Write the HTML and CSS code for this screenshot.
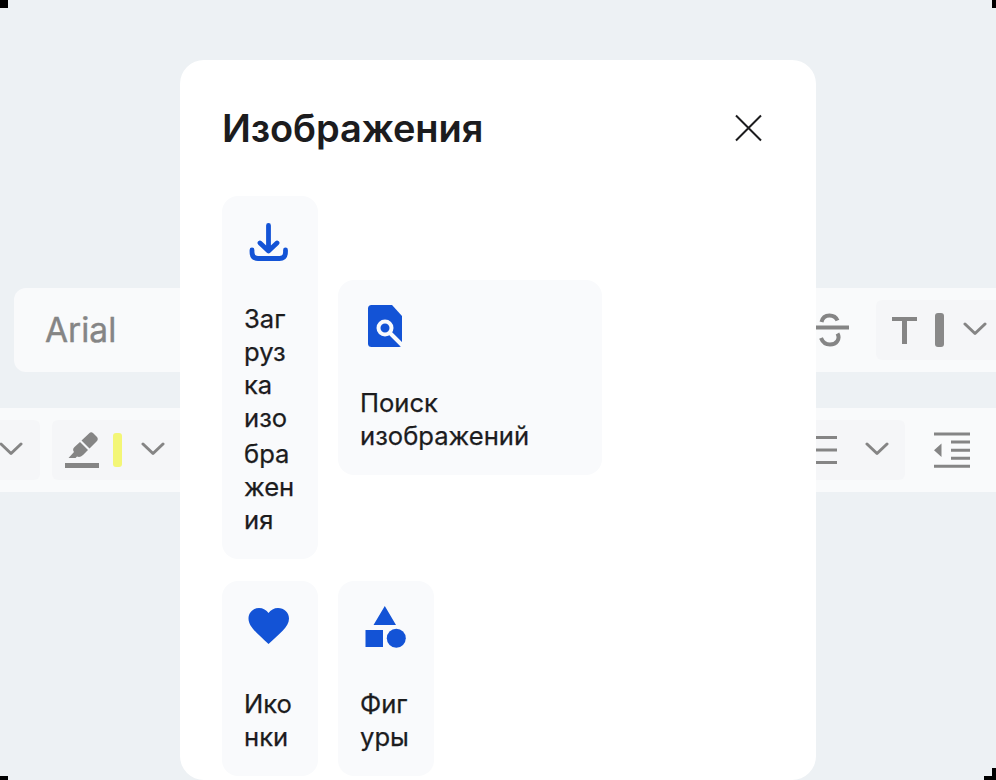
FILE: index.html
```html
<!DOCTYPE html>
<html lang="ru">
<head>
<meta charset="utf-8">
<title>Изображения</title>
<link rel="stylesheet" href="styles.css">
</head>
<body>
<main class="stage">
  <div class="toolbar toolbar-top">
    <span class="font-name">Arial</span>
    <div class="tools-right">
      <svg class="icon" width="40" height="40" viewBox="0 0 40 40" fill="none" stroke="#858585" stroke-width="4"><path d="M12.500 12C13.500 7.500 17 5.500 20.500 5.500C24.500 5.500 27 7 28.500 10.500M3 17.500H41M12 28C14 33 18 34.500 21 34.500C27.500 34.500 31.500 29 28.500 23.500"/></svg>
      <div class="tool-group group-color">
        <svg width="25" height="27" viewBox="0 0 25 27" fill="#858585"><path d="M0 0H25V4H15V27H10V4H0Z"/></svg>
        <span class="swatch swatch-gray"></span>
        <svg class="chevron" width="24" height="14" viewBox="0 0 24 14"><path d="M2 2L12 11.500L22 2"/></svg>
      </div>
    </div>
  </div>
  <div class="toolbar toolbar-bottom">
    <div class="tools-left">
      <div class="tool-group group-cut">
        <svg class="chevron" width="24" height="14" viewBox="0 0 24 14"><path d="M2 2L12 11.500L22 2"/></svg>
      </div>
      <div class="tool-group group-marker">
        <svg width="34" height="36" viewBox="0 0 34 36" fill="#858585"><path d="M0 31H34V36H0ZM3.500 26L9 20C7.500 18 8 16.500 9.500 15L15 10L23 18L18 23C16 25 14 25.500 12 24.500L10.500 26ZM16.500 8.500L24 1.500Q26-.5 28 1L32 5Q33.500 7 32 9L24.500 16.500Z"/></svg>
        <span class="swatch swatch-yellow"></span>
        <svg class="chevron" width="24" height="14" viewBox="0 0 24 14"><path d="M2 2L12 11.500L22 2"/></svg>
      </div>
    </div>
    <div class="tools-right">
      <div class="tool-group group-align">
        <svg width="36" height="30" viewBox="0 0 36 30" fill="#858585"><path d="M0 1H36V4H0ZM0 13.500H36V16.500H0ZM0 26H36V29H0Z"/></svg>
        <svg class="chevron" width="24" height="14" viewBox="0 0 24 14"><path d="M2 2L12 11.500L22 2"/></svg>
      </div>
      <svg class="outdent" width="36" height="36" viewBox="0 0 36 36" fill="#858585"><path d="M0 .5H36V3.500H0ZM17 8.500H36V11.500H17ZM17 16.700H36V19.700H17ZM17 24.700H36V27.700H17ZM0 32.800H36V35.800H0ZM0 18.200L7.500 11.500V25Z"/></svg>
    </div>
  </div>

  <section class="dialog">
    <header class="dialog-head">
      <h1>Изображения</h1>
      <svg class="close" width="28" height="28" viewBox="0 0 28 28" fill="none" stroke="#1c1c1e" stroke-width="2"><path d="M1 1.500L26 26.500M26 1.500L1 26.500"/></svg>
    </header>
    <div class="row row-first">
      <button class="card">
        <svg class="card-icon" width="48" height="48" viewBox="0 0 48 48" fill="none" stroke="#1353d6" stroke-width="4.800" stroke-linecap="round" stroke-linejoin="round"><path d="M24.500 8.500V33M16 26L24.500 34L33 26M8 33V35Q8 41.500 14 41.500H35.500Q41.500 41.500 41.500 35V33"/></svg>
        <span class="label">Заг<br>руз<br>ка<br>изо</span>
        <span class="label label-next">бра<br>жен<br>ия</span>
      </button>
      <button class="card card-wide">
        <svg class="card-icon" width="48" height="48" viewBox="0 0 48 48"><path fill="#1353d6" d="M11.500 4H32L42 15V43Q42 46 39 46H11.500Q8 46 8 42.500V7.500Q8 4 11.500 4Z"/><g fill="none" stroke="#f9fafc" stroke-width="4"><circle cx="25" cy="27" r="6.500"/><path d="M29.500 31.500L43 45"/></g></svg>
        <span class="label">Поиск<br>изображений</span>
      </button>
    </div>
    <div class="row">
      <button class="card">
        <svg class="card-icon" width="48" height="48" viewBox="0 0 48 48" fill="#1353d6"><path d="M24.500 42C14 32 4.500 25 4.500 16.500C4.500 10.500 9 6 15 6C19 6 22.500 8 24.500 11C26.500 8 30 6 34 6C40 6 45 10.500 45 16.500C45 25 35 32 24.500 42Z"/></svg>
        <span class="label">Ико<br>нки</span>
      </button>
      <button class="card">
        <svg class="card-icon" width="48" height="48" viewBox="0 0 48 48" fill="#1353d6"><path d="M24.800 4L36 23H13.500ZM5.500 28H23V45H5.500Z"/><circle cx="36.300" cy="36.300" r="9.500"/></svg>
        <span class="label">Фиг<br>уры</span>
      </button>
    </div>
  </section>
  <i class="corner corner-tl"></i>
  <i class="corner corner-tr"></i>
  <i class="corner corner-bl"></i>
  <i class="corner corner-br"></i>
  <i class="corner corner-br-side"></i>
</main>
</body>
</html>
```
FILE: styles.css
```css
* { box-sizing: border-box; }
body { margin: 0; font-family: Inter, "Liberation Sans", sans-serif; }
svg { display: block; flex: none; }

.stage {
  position: relative;
  width: 996px;
  height: 780px;
  padding-top: 288px;
  overflow: hidden;
  background: #edf1f4;
}

.toolbar {
  display: flex;
  align-items: center;
  justify-content: space-between;
  height: 84px;
  background: #f9fafb;
}
.toolbar-top { margin-left: 14px; padding-left: 31px; border-radius: 12px 0 0 12px; }
.toolbar-bottom { margin-top: 36px; }
.font-name {
  margin-top: -1px;
  color: #858585;
  font-size: 33.5px;
  line-height: 42px;
  -webkit-text-stroke: .4px #858585;
}
.tools-left, .tools-right { display: flex; align-items: center; }
.tools-left { gap: 12px; }
.tool-group {
  display: flex;
  align-items: center;
  height: 60px;
  background: #f5f6f8;
}
.icon { margin-right: 27px; }
.group-color { width: 120px; padding-left: 16px; border-radius: 6px 0 0 6px; }
.group-cut { width: 40px; border-radius: 0 6px 6px 0; }
.group-cut .chevron { margin-left: -1px; }
.group-marker { width: 160px; padding-left: 13px; border-radius: 6px; }
.group-align { width: 125px; padding-left: 21px; border-radius: 6px; }
.group-align .chevron { margin-left: 28px; }
.outdent { margin: 0 26px 0 29px; }
.chevron { margin-top: -3px; fill: none; stroke: #858585; stroke-width: 3; stroke-linecap: round; stroke-linejoin: round; }
.swatch { flex: none; height: 34px; border-radius: 3px; }
.swatch-gray { width: 9px; margin: 0 19px 0 18px; background: #898989; }
.swatch-yellow { width: 9px; margin: 0 19px 0 14px; background: #f3f676; }

.dialog {
  position: absolute;
  top: 60px;
  left: 180px;
  width: 636px;
  height: 720px;
  padding: 42px;
  border-radius: 24px;
  background: #fff;
}
.dialog-head {
  display: flex;
  align-items: center;
  justify-content: space-between;
  height: 52px;
  padding-right: 11px;
}
h1 { margin: 0; color: #1c1c1e; font-size: 38px; font-weight: 600; letter-spacing: -.1px; line-height: 52px; }
.row { display: flex; align-items: center; gap: 20px; margin-top: 22px; }
.row-first { margin-top: 42px; }
.card {
  width: 96px;
  margin: 0;
  padding: 21px 22px 23px;
  border: 0;
  border-radius: 16px;
  background: #f9fafc;
  color: #1c1c1e;
  font: 400 25.6px/33px Inter, "Liberation Sans", sans-serif;
  -webkit-text-stroke: .25px #1c1c1e;
  text-align: left;
}
.card-wide { width: 264px; }
.card-icon { margin-bottom: 37px; }
.label { display: block; white-space: nowrap; }
.label-next { margin-top: 3px; }

.corner { position: absolute; background: #000; }
.corner-tl { top: 0; left: 0; width: 8px; height: 8px; }
.corner-tr { top: 0; right: 0; width: 4px; height: 8px; }
.corner-bl { bottom: 0; left: 0; width: 8px; height: 4px; }
.corner-br { right: 0; bottom: 0; width: 12px; height: 4px; }
.corner-br-side { right: 0; bottom: 4px; width: 4px; height: 8px; }
```
